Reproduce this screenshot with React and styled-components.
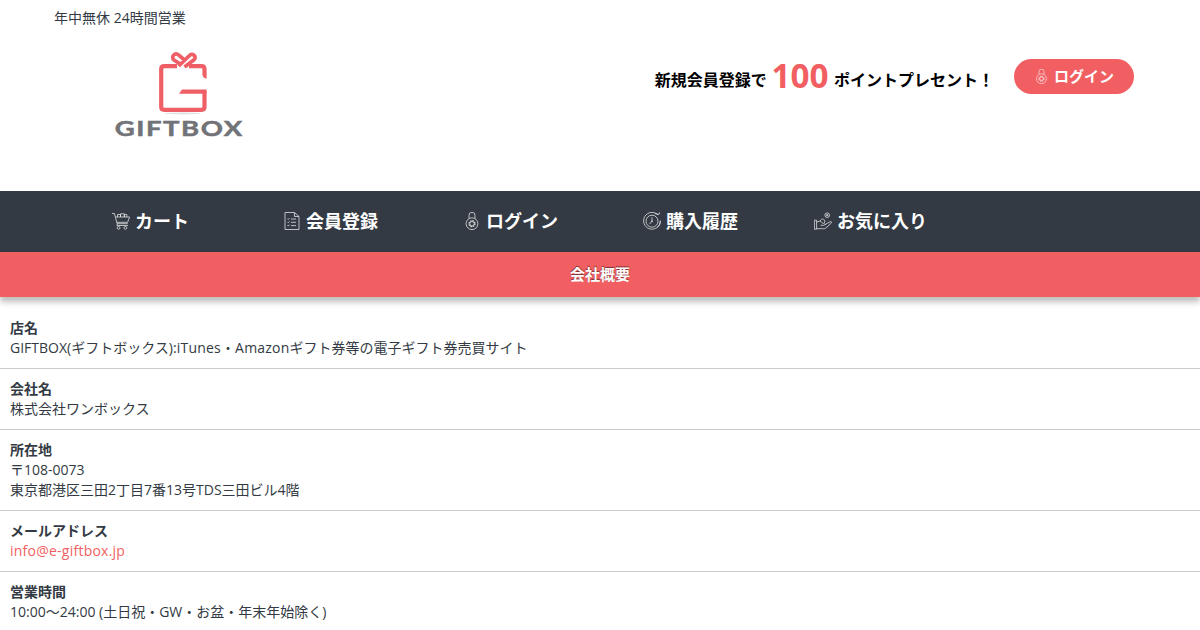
import React from 'react';
import styled, { createGlobalStyle } from 'styled-components';

const GlobalStyle = createGlobalStyle`
  * {
    box-sizing: border-box;
  }
  body {
    margin: 0;
    background: #fff;
    color: #333a43;
    font-family: 'Open Sans', 'Noto Sans CJK JP', sans-serif;
    font-size: 14px;
    line-height: 20px;
    overflow: hidden;
  }
  a {
    color: inherit;
    text-decoration: none;
  }
`;

const Header = styled.header`
  height: 191px;
  padding: 8px 66px 0 54px;
`;

const Tagline = styled.p`
  margin: 0;
`;

const HeaderMain = styled.div`
  display: flex;
  justify-content: space-between;
  align-items: flex-start;
  padding: 24px 0 0 56px;
`;

const LogoLink = styled.a`
  display: block;
  width: 138px;
  height: 95px;
  svg {
    display: block;
  }
`;

const Promo = styled.div`
  display: flex;
  align-items: flex-start;
  padding-top: 7px;
`;

const PromoText = styled.p`
  display: flex;
  align-items: flex-start;
  margin: 0 20px 0 0;
  color: #000;
  font-size: 16px;
  font-weight: 700;
  line-height: 43px;
  white-space: nowrap;
`;

const Points = styled.span`
  margin: 0 5.4px 0 4.6px;
  color: #f15f62;
  font-size: 33.3px;
  line-height: 32px;
`;

const LoginButton = styled.a`
  display: flex;
  align-items: center;
  justify-content: center;
  gap: 5px;
  width: 120px;
  height: 35px;
  padding-bottom: 1px;
  border-radius: 18px;
  background: #f15f62;
  color: #fff;
  font-size: 15px;
  font-weight: 700;
`;

const Nav = styled.nav`
  display: grid;
  grid-template-columns: repeat(5, 180px);
  height: 61px;
  padding: 0 0 2px 60.5px;
  background: #333a43;
`;

const NavItem = styled.a`
  display: flex;
  align-items: center;
  justify-content: center;
  gap: 5px;
  color: #fff;
  font-size: 18px;
  font-weight: 700;
`;

const Icon = styled.svg.attrs({ viewBox: '0 0 18 18' })`
  flex: none;
  width: ${({ $size = 18 }) => $size}px;
  height: ${({ $size = 18 }) => $size}px;
  fill: none;
  stroke: #fff;
  stroke-width: 0.8;
  opacity: 0.85;
`;

const PageTitle = styled.h1`
  margin: 0;
  height: 45px;
  background: #f15f62;
  box-shadow: 0 5px 6px rgba(0, 0, 0, 0.26);
  color: #fff;
  font-size: 15px;
  line-height: 45px;
  text-align: center;
  text-shadow: 0 -1px 1px rgba(0, 0, 0, 0.5);
`;

const InfoList = styled.dl`
  margin: 11px 0 0;
`;

const InfoRow = styled.div`
  padding: 10px;
  border-bottom: 1px solid #ccc;
`;

const InfoTerm = styled.dt`
  font-weight: 700;
`;

const InfoDetail = styled.dd`
  margin: 0;
`;

const Latin = styled.span`
  letter-spacing: 0.2px;
`;

const MailLink = styled.a`
  && {
    color: #f15f62;
    letter-spacing: 0.24px;
  }
`;

const CartIcon = () => (
  <Icon>
    <path d="M0 1.5h2.4l2.8 10.2h10.6M3.6 5h14l-2 5.3H4.9M5.4 11.7l-.5 1.8h11" />
    <path d="M5.5 5V2.5h3V5M8.5 5V1.8h3.8V5M12.3 5V2.5h2.5V5" />
    <circle cx="6.6" cy="15.8" r="1.4" />
    <circle cx="13.4" cy="15.8" r="1.4" />
  </Icon>
);

const FormIcon = () => (
  <Icon>
    <path d="M2 .5h9.5l4.5 4v13H2zM11.5.5v4H16" />
    <path d="M4.5 6.7l.7.7 1.2-1.3M4.5 10l.7.7 1.2-1.3M4.5 13.3l.7.7 1.2-1.3M8 7h5M8 10.3h5M8 13.6h5" />
  </Icon>
);

const LockIcon = ({ size }) => (
  <Icon $size={size}>
    <path d="M6 6.6V3.3a3 3 0 0 1 6 0v3.3" />
    <circle cx="9" cy="11.7" r="5.9" />
    <circle cx="9" cy="11.7" r="3" strokeWidth="1.2" strokeDasharray="1.57 0.78" />
    <circle cx="9" cy="11.7" r="2.2" />
  </Icon>
);

const HistoryIcon = () => (
  <Icon>
    <path d="M15 2.9A8.4 8.4 0 1 0 17.4 9M11.8 1.6l4.2.8.6-2M14.5 15.3c2-1.6 3-4 2.8-6.8" />
    <circle cx="9" cy="9.2" r="6" />
    <path d="M9 5.3v3.8l-2.5 3" />
    <circle cx="9" cy="9.3" r=".5" />
  </Icon>
);

const FavoriteIcon = () => (
  <Icon>
    <path d="M.4 8.2h2.2v9H.4zM2.6 10l3-.8c1.5 0 2.3 1.8 3.8 2.2 2 .3 2 1.9.2 1.9H6.5M11 12.6l5-2.8c1.5-.6 2.3.5 1.2 1.4L12 15.9c-1 .8-2 1-3.5.8H2.6" />
    <circle cx="13.2" cy="3.2" r="2.3" />
    <path d="M6.3 9.2a2.3 2.3 0 1 1 4 1.7" />
    <path d="M13.2 2v2.4M12 3.2h2.4" />
  </Icon>
);

const Logo = () => (
  <svg width="138" height="95" viewBox="0 0 138 95">
    <ellipse cx="73" cy="61.4" rx="18" ry="1" fill="#e2e2e2" />
    <g fill="none" stroke="#ef5f66" strokeWidth="4.2">
      <path d="M67 14.2H54.2q-3 0-3 2.8v38q0 2.8 3 2.8h37.3q3 0 3-2.8V39.5M79 14.2h12.5q3 0 3 2.8v6" />
      <path
        d="M70.5 12.2L64 8C60.4 5 65 .1 68.6 2.9l6.4 5.6M68.6 14L79 4c3.4-3.6 8.4.4 5 3.8L74.5 15"
        strokeWidth="3.7"
      />
    </g>
    <path d="M72 37.4h24.6v4.3H69zM92.4 22.5h4.2v4.3q-3.4-.6-4.2-4.3z" fill="#ef5f66" />
    <text
      transform="translate(4.8 83.7) scale(1.34 1)"
      fontFamily="Lato, sans-serif"
      fontWeight="700"
      fontSize="20.5"
      textLength="95"
      fill="#717378"
      stroke="#717378"
      strokeWidth="0.5"
    >
      GIFTBOX
    </text>
  </svg>
);

const navItems = [
  { label: 'カート', icon: CartIcon },
  { label: '会員登録', icon: FormIcon },
  { label: 'ログイン', icon: LockIcon },
  { label: '購入履歴', icon: HistoryIcon },
  { label: 'お気に入り', icon: FavoriteIcon },
];

export default function App() {
  return (
    <>
      <GlobalStyle />
      <Header>
        <Tagline>年中無休 24時間営業</Tagline>
        <HeaderMain>
          <LogoLink href="#">
            <Logo />
          </LogoLink>
          <Promo>
            <PromoText>
              新規会員登録で <Points>100</Points> ポイントプレセント！
            </PromoText>
            <LoginButton href="#">
              <LockIcon size={15} />
              ログイン
            </LoginButton>
          </Promo>
        </HeaderMain>
      </Header>
      <Nav>
        {navItems.map(({ label, icon: NavIcon }) => (
          <NavItem href="#" key={label}>
            <NavIcon />
            {label}
          </NavItem>
        ))}
      </Nav>
      <PageTitle>会社概要</PageTitle>
      <InfoList>
        <InfoRow>
          <InfoTerm>店名</InfoTerm>
          <InfoDetail>
            GIFTBOX(ギフトボックス)<Latin>:iTunes・Amazon</Latin>ギフト券等の電子ギフト券売買サイト
          </InfoDetail>
        </InfoRow>
        <InfoRow>
          <InfoTerm>会社名</InfoTerm>
          <InfoDetail>株式会社ワンボックス</InfoDetail>
        </InfoRow>
        <InfoRow>
          <InfoTerm>所在地</InfoTerm>
          <InfoDetail>〒108-0073</InfoDetail>
          <InfoDetail>東京都港区三田2丁目7番13号TDS三田ビル4階</InfoDetail>
        </InfoRow>
        <InfoRow>
          <InfoTerm>メールアドレス</InfoTerm>
          <InfoDetail>
            <MailLink href="mailto:info@e-giftbox.jp">info@e-giftbox.jp</MailLink>
          </InfoDetail>
        </InfoRow>
        <InfoRow>
          <InfoTerm>営業時間</InfoTerm>
          <InfoDetail>10:00〜24:00 (土日祝・GW・お盆・年末年始除く)</InfoDetail>
        </InfoRow>
      </InfoList>
    </>
  );
}
